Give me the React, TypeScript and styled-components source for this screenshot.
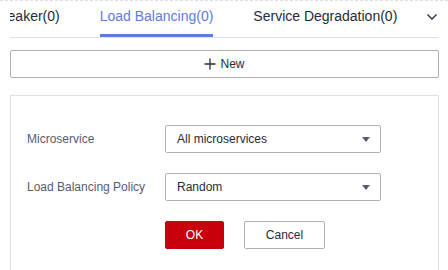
import React, { useState } from "react";
import styled, { createGlobalStyle } from "styled-components";

const GlobalStyle = createGlobalStyle`
  body {
    margin: 0;
    background: #fff;
    font-family: "Liberation Sans", Arial, sans-serif;
    color: #252b3a;
  }
`;

const Page = styled.div`
  width: 448px;
  height: 270px;
  overflow: hidden;
  border-top: 1px dashed #dcdfe6;
  box-sizing: border-box;
  padding: 0 9px 0 10px;
`;

const TabBar = styled.div`
  display: flex;
  align-items: stretch;
  height: 36px;
  border-bottom: 1px solid #dfe1e6;
`;

const TabScroller = styled.div`
  flex: 1;
  min-width: 0;
  overflow: hidden;
`;

const TabTrack = styled.div`
  display: flex;
  gap: 40px;
  height: 100%;
  margin-left: -60px;
`;

const Tab = styled.div<{ $active?: boolean }>`
  display: flex;
  align-items: center;
  white-space: nowrap;
  font-size: 14px;
  color: ${(p) => (p.$active ? "#5e7ce0" : "#252b3a")};
  padding-bottom: 4px;
  box-sizing: border-box;
  border-bottom: 3px solid ${(p) => (p.$active ? "#5e7ce0" : "transparent")};
`;

const More = styled.div`
  flex: none;
  width: 22px;
  display: flex;
  align-items: center;
  justify-content: flex-end;
  padding: 0 1px 4px 0;
  box-sizing: border-box;
`;

const NewButton = styled.button`
  display: flex;
  align-items: center;
  justify-content: center;
  gap: 4px;
  width: 100%;
  height: 28px;
  margin-top: 12px;
  border: 1px solid #adb0b8;
  border-radius: 2px;
  background: #fff;
  font-family: inherit;
  font-size: 12px;
  color: #252b3a;
  padding: 0;
`;

const Panel = styled.div`
  margin-top: 17px;
  border: 1px solid #dfe1e6;
  border-bottom: none;
  padding: 29px 16px 40px;
  display: flex;
  flex-direction: column;
  gap: 20px;
`;

const Row = styled.div`
  display: flex;
  align-items: center;
`;

const Label = styled.div`
  width: 138px;
  font-size: 12px;
  color: #575d6c;
`;

const Select = styled.div`
  width: 216px;
  height: 28px;
  box-sizing: border-box;
  border: 1px solid #adb0b8;
  border-radius: 2px;
  display: flex;
  align-items: center;
  justify-content: space-between;
  padding: 0 10px 0 11px;
  font-size: 12px;
  color: #252b3a;
`;

const Caret = styled.span`
  width: 0;
  height: 0;
  border-left: 4px solid transparent;
  border-right: 4px solid transparent;
  border-top: 5px solid #575d6c;
`;

const Actions = styled.div`
  display: flex;
  gap: 20px;
  padding-left: 138px;
`;

const ActionButton = styled.button<{ $primary?: boolean }>`
  height: 28px;
  min-width: ${(p) => (p.$primary ? "59px" : "81px")};
  box-sizing: border-box;
  border-radius: 2px;
  border: 1px solid ${(p) => (p.$primary ? "#c7000b" : "#adb0b8")};
  background: ${(p) => (p.$primary ? "#c7000b" : "#fff")};
  color: ${(p) => (p.$primary ? "#fff" : "#252b3a")};
  font-family: inherit;
  font-size: 12px;
  padding: 0;
`;

const tabs = ["Circuit Breaker(0)", "Load Balancing(0)", "Service Degradation(0)"];

export default function App() {
  const [active] = useState(1);
  return (
    <>
      <GlobalStyle />
      <Page>
        <TabBar>
          <TabScroller>
            <TabTrack>
              {tabs.map((t, i) => (
                <Tab key={t} $active={i === active}>
                  {t}
                </Tab>
              ))}
            </TabTrack>
          </TabScroller>
          <More>
            <svg width="12" height="8" viewBox="0 0 12 8">
              <path d="M1.5 1.5 L6 6 L10.5 1.5" fill="none" stroke="#252b3a" strokeWidth="1.3" />
            </svg>
          </More>
        </TabBar>
        <NewButton>
          <svg width="12" height="12" viewBox="0 0 12 12">
            <path d="M6 0.5 V11.5 M0.5 6 H11.5" stroke="#252b3a" strokeWidth="1.3" />
          </svg>
          New
        </NewButton>
        <Panel>
          <Row>
            <Label>Microservice</Label>
            <Select>
              All microservices
              <Caret />
            </Select>
          </Row>
          <Row>
            <Label>Load Balancing Policy</Label>
            <Select>
              Random
              <Caret />
            </Select>
          </Row>
          <Actions>
            <ActionButton $primary>OK</ActionButton>
            <ActionButton>Cancel</ActionButton>
          </Actions>
        </Panel>
      </Page>
    </>
  );
}
